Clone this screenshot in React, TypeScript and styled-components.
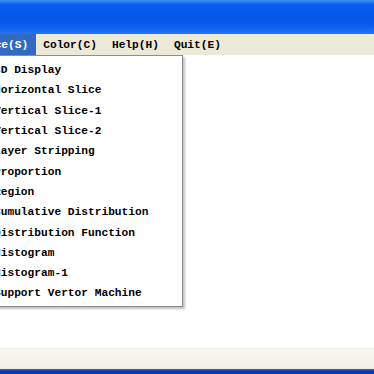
import * as React from "react"
import styled, {createGlobalStyle} from "styled-components";

const GlobalStyle = createGlobalStyle`
  html, body {
    margin: 0;
    padding: 0;
    overflow: hidden;
    background: #fff;
  }
`;

const menus = [
    {label: "Slice(S)", open: true},
    {label: "Color(C)", open: false},
    {label: "Help(H)", open: false},
    {label: "Quit(E)", open: false},
]

const sliceItems = ["3D Display", "Horizontal Slice", "Vertical Slice-1", "Vertical Slice-2",
                    "Layer Stripping", "Proportion", "Region", "Cumulative Distribution",
                    "Distribution Function", "Histogram", "Histogram-1", "Support Vertor Machine"]

// the screenshot is a crop: the window's left part lies outside the picture
const CROP = 33;

const Frame = styled.div`
  width: 374px;
  height: 374px;
  overflow: hidden;
  display: flex;
  flex-direction: column;
  font-family: "Liberation Mono", "DejaVu Sans Mono", monospace;
  font-size: 11.2px;
  font-weight: bold;
`;

const TitleBar = styled.div`
  height: 34px;
  flex-shrink: 0;
  background: linear-gradient(to bottom, #3d8ef6 0px, #2a78f2 2px, #0a5ced 5px, #0557ea 18px, #0a5cee 26px, #1a6af2 31px, #2674f0 34px);
`;

const MenuBar = styled.div`
  height: 21px;
  flex-shrink: 0;
  display: flex;
  align-items: stretch;
  margin-left: -${CROP}px;
  background: #ece9d8;
`;

const MenuItem = styled.div<{ $open: boolean }>`
  display: flex;
  align-items: center;
  padding: 1px 7.5px 0;
  color: ${p => p.$open ? "#fff" : "#000"};
  background: ${p => p.$open ? "#316ac5" : "transparent"};
  white-space: pre;
`;

const Client = styled.div`
  flex: 1;
  position: relative;
  background: #fff;
`;

const Dropdown = styled.div`
  position: absolute;
  top: 0;
  left: -${CROP}px;
  width: 214px;
  padding: 4px 0 2px;
  background: #fff;
  border: 1px solid #8d8d8d;
  box-shadow: 2px 2px 2px rgba(0, 0, 0, 0.25);
`;

const DropItem = styled.div`
  height: 20.3px;
  display: flex;
  align-items: center;
  padding-left: 26px;
  color: #000;
  white-space: pre;
`;

const StatusBar = styled.div`
  height: 20px;
  flex-shrink: 0;
  background: linear-gradient(to bottom, #f7f6f1, #f0eee6);
  border-top: 1px solid #f2f1ea;
`;

const BottomEdge = styled.div`
  height: 5px;
  flex-shrink: 0;
  background: linear-gradient(to bottom, #3a6fd8 0px, #0b3bb2 2px, #0a35a6 5px);
`;

const App: React.FC = () => {
    return (
        <>
            <GlobalStyle/>
            <Frame>
                <TitleBar/>
                <MenuBar>
                    {menus.map((m, index) => (
                        <MenuItem key={index} $open={m.open}>{m.label}</MenuItem>
                    ))}
                </MenuBar>
                <Client>
                    <Dropdown>
                        {sliceItems.map((item, index) => (
                            <DropItem key={index}>{item}</DropItem>
                        ))}
                    </Dropdown>
                </Client>
                <StatusBar/>
                <BottomEdge/>
            </Frame>
        </>
    )
}

export default App
